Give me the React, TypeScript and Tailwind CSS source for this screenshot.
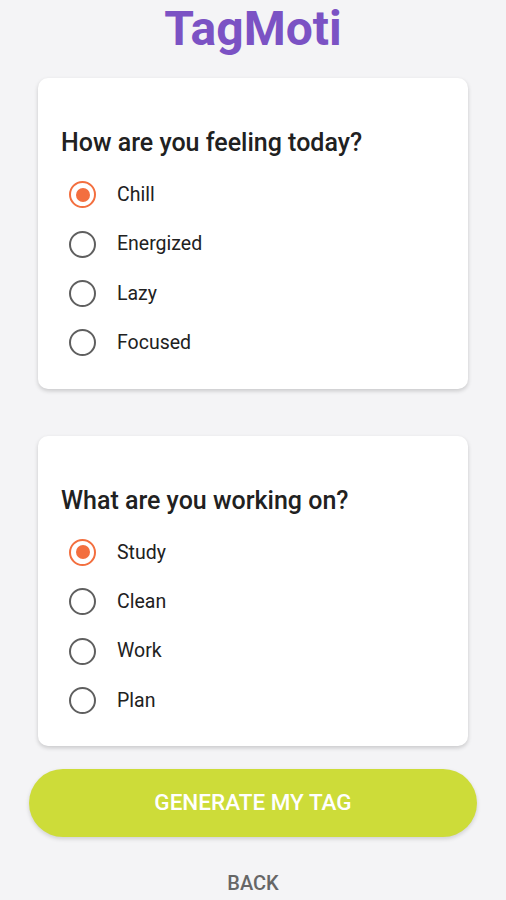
import { useState } from 'react'

const moods = ['Chill', 'Energized', 'Lazy', 'Focused']
const tasks = ['Study', 'Clean', 'Work', 'Plan']

function Radio({ checked }: { checked: boolean }) {
  return (
    <span
      className={
        checked
          ? 'flex h-[27px] w-[27px] items-center justify-center rounded-full border-[2.5px] border-[#f36f3f]'
          : 'flex h-[27px] w-[27px] items-center justify-center rounded-full border-[2.5px] border-[#5f5f5f]'
      }
    >
      {checked ? <span className="h-[14px] w-[14px] rounded-full bg-[#f36f3f]" /> : null}
    </span>
  )
}

function QuestionCard({
  title,
  options,
  value,
  onChange,
}: {
  title: string
  options: string[]
  value: string
  onChange: (v: string) => void
}) {
  return (
    <div className="mx-[38px] rounded-[10px] bg-white pt-[50px] pb-[21px] pl-[23px] pr-4 shadow-[0_2px_4px_rgba(0,0,0,0.18)]">
      <h2 className="text-[25px] font-medium leading-[30px] text-[#212121]">{title}</h2>
      <div className="mt-[12px] flex flex-col">
        {options.map((o) => (
          <button
            key={o}
            type="button"
            onClick={() => onChange(o)}
            className="flex h-[49.4px] items-center text-left"
          >
            <span className="ml-[8px]">
              <Radio checked={value === o} />
            </span>
            <span className="ml-[21px] text-[19.5px] leading-none text-[#212121]">{o}</span>
          </button>
        ))}
      </div>
    </div>
  )
}

export default function App() {
  const [mood, setMood] = useState('Chill')
  const [task, setTask] = useState('Study')

  return (
    <div
      className="flex min-h-[900px] flex-col bg-[#f4f4f6]"
      style={{ fontFamily: 'Roboto, "Noto Sans", sans-serif' }}
    >
      <h1 className="mb-[21px] text-center text-[48px] font-bold leading-[57px] text-[#7b52c4]">
        TagMoti
      </h1>

      <QuestionCard title="How are you feeling today?" options={moods} value={mood} onChange={setMood} />

      <div className="h-[47px]" />

      <QuestionCard title="What are you working on?" options={tasks} value={task} onChange={setTask} />

      <div className="mx-[29px] mt-[23px]">
        <button
          type="button"
          className="h-[68px] w-full rounded-full bg-[#cddc39] text-[22.5px] font-medium uppercase text-white shadow-[0_2px_4px_rgba(0,0,0,0.15)]"
        >
          Generate my tag
        </button>
      </div>

      <div className="mt-[34px] text-center">
        <button type="button" className="text-[20px] font-medium uppercase leading-[24px] text-[#666666]">
          Back
        </button>
      </div>
    </div>
  )
}
